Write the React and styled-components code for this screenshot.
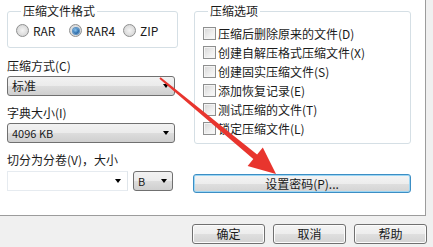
import React from 'react';
import styled, { createGlobalStyle } from 'styled-components';

const GlobalStyle = createGlobalStyle`
  body {
    margin: 0;
    background: #f0f0f0;
    font-family: "Noto Sans CJK SC", "Liberation Sans", sans-serif;
    font-size: 12px;
    color: #1a1a1a;
  }
`;

const formats = ['RAR', 'RAR4', 'ZIP'];
const options = [
  '压缩后删除原来的文件(D)',
  '创建自解压格式压缩文件(X)',
  '创建固实压缩文件(S)',
  '添加恢复记录(E)',
  '测试压缩的文件(T)',
  '锁定压缩文件(L)',
];

function App() {
  return (
    <Window>
      <GlobalStyle />
      <TabPage>
        <LeftCol>
          <Group $height={45}>
            <Legend>压缩文件格式</Legend>
            <RadioRow>
              {formats.map((f) => (
                <RadioItem key={f} $width={f === 'RAR' ? 53 : 54}>
                  <Radio $checked={f === 'RAR4'} />
                  <span>{f}</span>
                </RadioItem>
              ))}
            </RadioRow>
          </Group>

          <Label>压缩方式(C)</Label>
          <Select>
            <span>标准</span>
            <Caret />
          </Select>

          <Label>字典大小(I)</Label>
          <Select $small>
            <span>4096 KB</span>
            <Caret />
          </Select>

          <Label>切分为分卷(V)，大小</Label>
          <SplitRow>
            <Combo>
              <Caret />
            </Combo>
            <Select $small $width={40}>
              <span>B</span>
              <Caret />
            </Select>
          </SplitRow>
        </LeftCol>

        <RightCol>
          <Group $height={141}>
            <Legend>压缩选项</Legend>
            <CheckList>
              {options.map((o) => (
                <CheckRow key={o}>
                  <CheckBox />
                  <span>{o}</span>
                </CheckRow>
              ))}
            </CheckList>
          </Group>
          <PushButton $focused $wide>设置密码(P)...</PushButton>
        </RightCol>

        <Arrow viewBox="0 0 426 216" width="426" height="216">
          <polygon
            points="160.6,77.2 257.1,154.5 262.8,147.6 276,174 247.6,166 253.3,159.1 159.4,78.8"
            fill="#e8352e"
          />
        </Arrow>
      </TabPage>

      <Footer>
        <PushButton>确定</PushButton>
        <PushButton>取消</PushButton>
        <PushButton>帮助</PushButton>
      </Footer>
    </Window>
  );
}

const Window = styled.div`
  width: 433px;
  height: 247px;
  background: #f0f0f0;
  overflow: hidden;
`;

const TabPage = styled.div`
  position: relative;
  box-sizing: border-box;
  width: 426px;
  height: 216px;
  background: #fff;
  border-right: 1px solid #9c9c9c;
  border-bottom: 1px solid #9c9c9c;
  padding: 3px 0 0 7px;
  display: flex;
  gap: 19px;
`;

const LeftCol = styled.div`
  width: 168px;
  display: flex;
  flex-direction: column;
`;

const RightCol = styled.div`
  width: 217px;
  display: flex;
  flex-direction: column;
`;

const Group = styled.fieldset`
  box-sizing: border-box;
  margin: 0;
  height: ${(p) => p.$height}px;
  padding: 5px 0 0 8px;
  border: 1px solid #d5dfe5;
  border-radius: 3px;
`;

const Legend = styled.legend`
  padding: 0 2px;
  margin-left: 5px;
  line-height: 16px;
  font-size: 12px;
`;

const RadioRow = styled.div`
  display: flex;
`;

const RadioItem = styled.label`
  width: ${(p) => p.$width}px;
  display: flex;
  align-items: center;
  gap: 4px;
  line-height: 13px;
`;

const Radio = styled.span`
  box-sizing: border-box;
  width: 13px;
  height: 13px;
  border-radius: 50%;
  border: 1px solid #8e8f8f;
  background: radial-gradient(circle at 50% 50%, #f4f4f4 0%, #d9d9d9 70%, #eaeaea 100%);
  display: flex;
  align-items: center;
  justify-content: center;

  &::after {
    content: '';
    display: ${(p) => (p.$checked ? 'block' : 'none')};
    width: 6px;
    height: 6px;
    border-radius: 50%;
    background: radial-gradient(circle at 40% 35%, #8cc6f0 0%, #2d6fae 60%, #1c4d86 100%);
    box-shadow: 0 0 0 1px #5a92c4;
  }
`;

const Label = styled.div`
  margin-top: 9px;
  margin-bottom: 2px;
  line-height: 16px;
  &:first-of-type {
    margin-top: 10px;
  }
`;

const Select = styled.div`
  box-sizing: border-box;
  width: ${(p) => (p.$width ? `${p.$width}px` : '100%')};
  height: 20px;
  border: 1px solid #707070;
  border-radius: 3px;
  background: linear-gradient(#f2f2f2 0%, #ebebeb 50%, #dddddd 51%, #cfcfcf 100%);
  display: flex;
  align-items: center;
  justify-content: space-between;
  padding: 0 5px 0 4px;
  font-size: ${(p) => (p.$small ? '11px' : '12px')};
  line-height: 18px;
`;

const Caret = styled.span`
  width: 0;
  height: 0;
  border-left: 3.5px solid transparent;
  border-right: 3.5px solid transparent;
  border-top: 4px solid #000;
  margin-left: auto;
`;

const SplitRow = styled.div`
  margin-top: 1px;
  display: flex;
  gap: 5px;
`;

const Combo = styled.div`
  box-sizing: border-box;
  width: 121px;
  height: 20px;
  border: 1px solid #e6ebf0;
  border-right-color: #dfe5ea;
  background: #fff;
  display: flex;
  align-items: center;
  padding-right: 6px;
`;

const CheckList = styled.div`
  display: flex;
  flex-direction: column;
`;

const CheckRow = styled.label`
  height: 19px;
  display: flex;
  align-items: center;
  gap: 2px;
`;

const CheckBox = styled.span`
  box-sizing: border-box;
  width: 13px;
  height: 13px;
  border: 1px solid #8e8f8f;
  background: linear-gradient(135deg, #d6d6d6 0%, #efefef 60%, #fbfbfb 100%);
  box-shadow: inset 0 0 0 1px #f4f4f4;
`;

const PushButton = styled.button`
  box-sizing: border-box;
  width: ${(p) => (p.$wide ? '218px' : '73px')};
  height: ${(p) => (p.$wide ? '19px' : '20px')};
  margin: ${(p) => (p.$wide ? '30px 0 0 -1px' : '0')};
  padding: 0;
  border: 1px solid ${(p) => (p.$focused ? '#3c8ec4' : '#707070')};
  border-radius: 3px;
  background: linear-gradient(#f4f4f4 0%, #ededed 50%, #dfdfdf 51%, #d3d3d3 100%);
  box-shadow: inset 0 0 0 1px ${(p) => (p.$focused ? '#9cd6f4' : '#fcfcfc')};
  font-family: inherit;
  font-size: 12px;
  line-height: 16px;
  color: #1a1a1a;
`;

const Footer = styled.div`
  display: flex;
  justify-content: flex-end;
  gap: 8px;
  padding: 8px 6px 0 0;
`;

const Arrow = styled.svg`
  position: absolute;
  left: 0;
  top: 0;
  pointer-events: none;
`;

export default App;
